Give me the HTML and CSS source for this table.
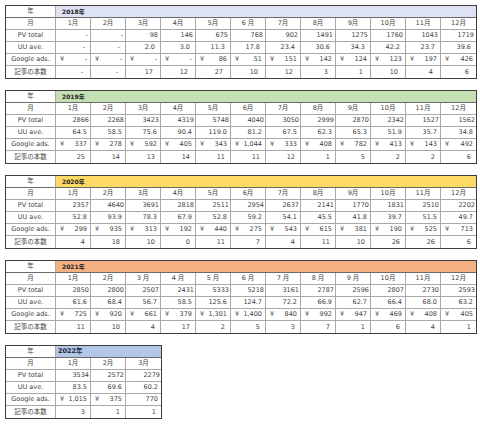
FILE: index.html
```html
<!DOCTYPE html>
<html lang="ja">
<head>
<meta charset="utf-8">
<link rel="stylesheet" href="styles.css">
</head>
<body>
<div class="page">

<div class="sheet full t2018">
  <div class="c lab yr-lab">年</div><div class="c year y2018 span12">2018年</div>
  <div class="c lab">月</div><div class="c mo">1月</div><div class="c mo">2月</div><div class="c mo">3月</div><div class="c mo">4月</div><div class="c mo">5月</div><div class="c mo">6 月</div><div class="c mo">7月</div><div class="c mo">8月</div><div class="c mo">9月</div><div class="c mo">10月</div><div class="c mo">11月</div><div class="c mo last">12月</div>
  <div class="c lab">PV total</div><div class="c pv">-</div><div class="c pv">-</div><div class="c pv">98</div><div class="c pv">146</div><div class="c pv">675</div><div class="c pv">768</div><div class="c pv">902</div><div class="c pv">1491</div><div class="c pv">1275</div><div class="c pv">1760</div><div class="c pv">1043</div><div class="c pv last">1719</div>
  <div class="c lab">UU ave.</div><div class="c uu">-</div><div class="c uu">-</div><div class="c uu">2.0</div><div class="c uu">3.0</div><div class="c uu">11.3</div><div class="c uu">17.8</div><div class="c uu">23.4</div><div class="c uu">30.6</div><div class="c uu">34.3</div><div class="c uu">42.2</div><div class="c uu">23.7</div><div class="c uu last">39.6</div>
  <div class="c lab">Google ads.</div><div class="c ads"><span>¥</span><span>-</span></div><div class="c ads"><span>¥</span><span>-</span></div><div class="c ads"><span>¥</span><span>-</span></div><div class="c ads"><span>¥</span><span>-</span></div><div class="c ads"><span>¥</span><span>86</span></div><div class="c ads"><span>¥</span><span>51</span></div><div class="c ads"><span>¥</span><span>151</span></div><div class="c ads"><span>¥</span><span>142</span></div><div class="c ads"><span>¥</span><span>124</span></div><div class="c ads"><span>¥</span><span>123</span></div><div class="c ads"><span>¥</span><span>197</span></div><div class="c ads last"><span>¥</span><span>426</span></div>
  <div class="c lab bot">記事の本数</div><div class="c ps bot">-</div><div class="c ps bot">-</div><div class="c ps bot">17</div><div class="c ps bot">12</div><div class="c ps bot">27</div><div class="c ps bot">10</div><div class="c ps bot">12</div><div class="c ps bot">3</div><div class="c ps bot">1</div><div class="c ps bot">10</div><div class="c ps bot">4</div><div class="c ps bot last">6</div>
</div>

<div class="sheet full">
  <div class="c lab yr-lab">年</div><div class="c year y2019 span12">2019年</div>
  <div class="c lab">月</div><div class="c mo">1月</div><div class="c mo">2月</div><div class="c mo">3月</div><div class="c mo">4月</div><div class="c mo">5月</div><div class="c mo">6月</div><div class="c mo">7月</div><div class="c mo">8月</div><div class="c mo">9月</div><div class="c mo">10月</div><div class="c mo">11月</div><div class="c mo last">12月</div>
  <div class="c lab">PV total</div><div class="c pv">2866</div><div class="c pv">2268</div><div class="c pv">3423</div><div class="c pv">4319</div><div class="c pv">5748</div><div class="c pv">4040</div><div class="c pv">3050</div><div class="c pv">2999</div><div class="c pv">2870</div><div class="c pv">2342</div><div class="c pv">1527</div><div class="c pv last">1562</div>
  <div class="c lab">UU ave.</div><div class="c uu">64.5</div><div class="c uu">58.5</div><div class="c uu">75.6</div><div class="c uu">90.4</div><div class="c uu">119.0</div><div class="c uu">81.2</div><div class="c uu">67.5</div><div class="c uu">62.3</div><div class="c uu">65.3</div><div class="c uu">51.9</div><div class="c uu">35.7</div><div class="c uu last">34.8</div>
  <div class="c lab">Google ads.</div><div class="c ads"><span>¥</span><span>337</span></div><div class="c ads"><span>¥</span><span>278</span></div><div class="c ads"><span>¥</span><span>592</span></div><div class="c ads"><span>¥</span><span>405</span></div><div class="c ads"><span>¥</span><span>343</span></div><div class="c ads"><span>¥</span><span>1,044</span></div><div class="c ads"><span>¥</span><span>333</span></div><div class="c ads"><span>¥</span><span>408</span></div><div class="c ads"><span>¥</span><span>782</span></div><div class="c ads"><span>¥</span><span>413</span></div><div class="c ads"><span>¥</span><span>143</span></div><div class="c ads last"><span>¥</span><span>492</span></div>
  <div class="c lab bot">記事の本数</div><div class="c ps bot">25</div><div class="c ps bot">14</div><div class="c ps bot">13</div><div class="c ps bot">14</div><div class="c ps bot">11</div><div class="c ps bot">11</div><div class="c ps bot">12</div><div class="c ps bot">1</div><div class="c ps bot">5</div><div class="c ps bot">2</div><div class="c ps bot">2</div><div class="c ps bot last">6</div>
</div>

<div class="sheet full">
  <div class="c lab yr-lab">年</div><div class="c year y2020 span12">2020年</div>
  <div class="c lab">月</div><div class="c mo">1月</div><div class="c mo">2月</div><div class="c mo">3月</div><div class="c mo">4月</div><div class="c mo">5月</div><div class="c mo">6月</div><div class="c mo">7月</div><div class="c mo">8月</div><div class="c mo">9月</div><div class="c mo">10月</div><div class="c mo">11月</div><div class="c mo last">12月</div>
  <div class="c lab">PV total</div><div class="c pv">2357</div><div class="c pv">4640</div><div class="c pv">3691</div><div class="c pv">2818</div><div class="c pv">2511</div><div class="c pv">2954</div><div class="c pv">2637</div><div class="c pv">2141</div><div class="c pv">1770</div><div class="c pv">1831</div><div class="c pv">2510</div><div class="c pv last">2202</div>
  <div class="c lab">UU ave.</div><div class="c uu">52.8</div><div class="c uu">93.9</div><div class="c uu">78.3</div><div class="c uu">67.9</div><div class="c uu">52.8</div><div class="c uu">59.2</div><div class="c uu">54.1</div><div class="c uu">45.5</div><div class="c uu">41.8</div><div class="c uu">39.7</div><div class="c uu">51.5</div><div class="c uu last">49.7</div>
  <div class="c lab">Google ads.</div><div class="c ads"><span>¥</span><span>299</span></div><div class="c ads"><span>¥</span><span>935</span></div><div class="c ads"><span>¥</span><span>313</span></div><div class="c ads"><span>¥</span><span>192</span></div><div class="c ads"><span>¥</span><span>440</span></div><div class="c ads"><span>¥</span><span>275</span></div><div class="c ads"><span>¥</span><span>543</span></div><div class="c ads"><span>¥</span><span>615</span></div><div class="c ads"><span>¥</span><span>381</span></div><div class="c ads"><span>¥</span><span>190</span></div><div class="c ads"><span>¥</span><span>525</span></div><div class="c ads last"><span>¥</span><span>713</span></div>
  <div class="c lab bot">記事の本数</div><div class="c ps bot">4</div><div class="c ps bot">18</div><div class="c ps bot">10</div><div class="c ps bot">0</div><div class="c ps bot">11</div><div class="c ps bot">7</div><div class="c ps bot">4</div><div class="c ps bot">11</div><div class="c ps bot">10</div><div class="c ps bot">26</div><div class="c ps bot">26</div><div class="c ps bot last">6</div>
</div>

<div class="sheet full">
  <div class="c lab yr-lab">年</div><div class="c year y2021 span12">2021年</div>
  <div class="c lab">月</div><div class="c mo">1月</div><div class="c mo">2月</div><div class="c mo">3 月</div><div class="c mo">4 月</div><div class="c mo">5 月</div><div class="c mo">6 月</div><div class="c mo">7 月</div><div class="c mo">8 月</div><div class="c mo">9 月</div><div class="c mo">10月</div><div class="c mo">11月</div><div class="c mo last">12月</div>
  <div class="c lab">PV total</div><div class="c pv">2850</div><div class="c pv">2800</div><div class="c pv">2507</div><div class="c pv">2431</div><div class="c pv">5333</div><div class="c pv">5218</div><div class="c pv">3161</div><div class="c pv">2787</div><div class="c pv">2596</div><div class="c pv">2807</div><div class="c pv">2730</div><div class="c pv last">2593</div>
  <div class="c lab">UU ave.</div><div class="c uu">61.6</div><div class="c uu">68.4</div><div class="c uu">56.7</div><div class="c uu">58.5</div><div class="c uu">125.6</div><div class="c uu">124.7</div><div class="c uu">72.2</div><div class="c uu">66.9</div><div class="c uu">62.7</div><div class="c uu">66.4</div><div class="c uu">68.0</div><div class="c uu last">63.2</div>
  <div class="c lab">Google ads.</div><div class="c ads"><span>¥</span><span>725</span></div><div class="c ads"><span>¥</span><span>920</span></div><div class="c ads"><span>¥</span><span>661</span></div><div class="c ads"><span>¥</span><span>379</span></div><div class="c ads"><span>¥</span><span>1,301</span></div><div class="c ads"><span>¥</span><span>1,400</span></div><div class="c ads"><span>¥</span><span>840</span></div><div class="c ads"><span>¥</span><span>992</span></div><div class="c ads"><span>¥</span><span>947</span></div><div class="c ads"><span>¥</span><span>469</span></div><div class="c ads"><span>¥</span><span>408</span></div><div class="c ads last"><span>¥</span><span>405</span></div>
  <div class="c lab bot">記事の本数</div><div class="c ps bot">11</div><div class="c ps bot">10</div><div class="c ps bot">4</div><div class="c ps bot">17</div><div class="c ps bot">2</div><div class="c ps bot">5</div><div class="c ps bot">3</div><div class="c ps bot">7</div><div class="c ps bot">1</div><div class="c ps bot">6</div><div class="c ps bot">4</div><div class="c ps bot last">1</div>
</div>

<div class="sheet short">
  <div class="c lab yr-lab">年</div><div class="c year y2022 span3">2022年</div>
  <div class="c lab">月</div><div class="c mo">1月</div><div class="c mo">2月</div><div class="c mo last">3月</div>
  <div class="c lab">PV total</div><div class="c pv">3534</div><div class="c pv">2572</div><div class="c pv last">2279</div>
  <div class="c lab">UU ave.</div><div class="c uu">83.5</div><div class="c uu">69.6</div><div class="c uu last">60.2</div>
  <div class="c lab">Google ads.</div><div class="c ads"><span>¥</span><span>1,015</span></div><div class="c ads"><span>¥</span><span>375</span></div><div class="c ads last"><span></span><span>770</span></div>
  <div class="c lab bot">記事の本数</div><div class="c ps bot">3</div><div class="c ps bot">1</div><div class="c ps bot last">1</div>
</div>

</div>
</body>
</html>
```

FILE: styles.css
```css
* { box-sizing: border-box; }
html, body { margin: 0; padding: 0; background: #ffffff; }
body {
  font-family: "DejaVu Sans", "Noto Sans CJK JP", sans-serif;
  font-size: 6.5px;
  color: #3f3f3f;
}
.page {
  display: flex;
  flex-direction: column;
  align-items: flex-start;
  gap: 11px;
  padding: 5px 0 0 5px;
}
.sheet {
  display: grid;
  grid-auto-rows: 12px;
  border: 1.5px solid #3c3c3c;
}
.sheet.full { grid-template-columns: 50px repeat(12, 35px); }
.sheet.short { grid-template-columns: 50px repeat(3, 35px); }
.c {
  display: flex;
  align-items: center;
  justify-content: flex-end;
  white-space: nowrap;
  overflow: hidden;
  line-height: 1;
  border-right: 1px solid #a9a9a9;
  border-bottom: 1px solid #a9a9a9;
  padding: 0 1px;
}
.c.last { border-right: none; }
.c.bot { border-bottom: none; }
.span12 { grid-column: span 12; border-right: none; }
.span3 { grid-column: span 3; border-right: none; }
.sheet .lab { justify-content: center; padding: 0; text-align: center; }
.yr-lab { border-bottom-color: #6a6a6a; }
.year {
  justify-content: flex-start;
  font-weight: bold;
  padding-left: 6px;
  color: #222222;
  font-size: 6px;
  border-bottom-color: #6a6a6a;
}
.y2018 { background: #dde3f3; }
.y2019 { background: #c5e0b3; }
.y2020 { background: #ffd965; }
.y2021 { background: #f4b183; }
.y2022 { background: #b4c7e7; padding-left: 2px; color: #1c2a44; font-size: 6.5px; }
.mo { justify-content: center; }
.pv { padding-right: 1px; }
.uu { padding-right: 3px; }
.ads { justify-content: space-between; padding: 0 3px 0 4px; }
.ps { padding-right: 5px; }
.t2018 .pv { padding-right: 2px; }
.t2018 .uu { padding-right: 5px; }
.t2018 .ps { padding-right: 7px; }
```
